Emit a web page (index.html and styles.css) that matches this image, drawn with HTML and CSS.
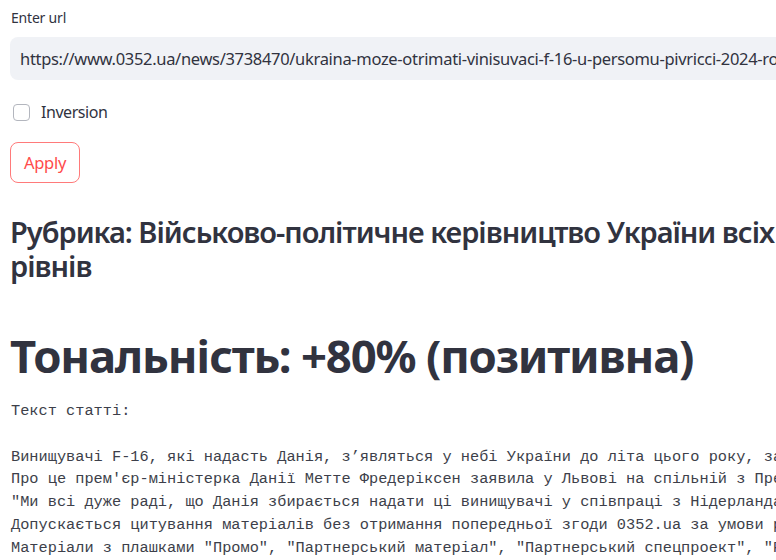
FILE: index.html
```html
<!DOCTYPE html>
<html lang="uk">
<head>
<meta charset="utf-8">
<title>Тональність статті</title>
<link rel="stylesheet" href="styles.css">
</head>
<body>
<main class="app">
  <label class="field-label" for="url">Enter url</label>
  <div class="text-input">
    <input id="url" type="text" value="https://www.0352.ua/news/3738470/ukraina-moze-otrimati-vinisuvaci-f-16-u-persomu-pivricci-2024-roci">
  </div>

  <label class="check-row">
    <span class="check-box"></span>
    <span class="check-text">Inversion</span>
  </label>

  <button class="apply-btn" type="button">Apply</button>

  <h3 class="rubric">Рубрика: Військово-політичне керівництво України всіх рівнів</h3>

  <h1 class="tone">Тональність: +80% (позитивна)</h1>

  <pre class="article">Текст статті:

Винищувачі F-16, які надасть Данія, з’являться у небі України до літа цього року, за словами прем'єр-міністерки.
Про це прем'єр-міністерка Данії Метте Фредеріксен заявила у Львові на спільній з Президентом України пресконференції.
"Ми всі дуже раді, що Данія збирається надати ці винищувачі у співпраці з Нідерландами та США", - сказала вона.
Допускається цитування матеріалів без отримання попередньої згоди 0352.ua за умови розміщення гіперпосилання.
Матеріали з плашками "Промо", "Партнерський матеріал", "Партнерський спецпроект", "Реклама" публікуються на правах реклами.</pre>
</main>
</body>
</html>
```

FILE: styles.css
```css
html, body {
  margin: 0;
  padding: 0;
  background: #ffffff;
  overflow: hidden;
}

.app {
  width: 840px;
  padding: 7px 0 0 10px;
  display: flex;
  flex-direction: column;
  align-items: flex-start;
  font-family: "Noto Sans", "Open Sans", sans-serif;
  color: #31333f;
}

.field-label {
  font-size: 14px;
  line-height: 22px;
  height: 22px;
  padding-left: 1px;
  letter-spacing: -0.2px;
}

.text-input {
  margin-top: 8px;
  width: 100%;
  height: 43px;
  background: #f0f2f6;
  border-radius: 8px;
  display: flex;
  align-items: center;
  overflow: hidden;
}

.text-input input {
  border: 0;
  outline: 0;
  background: transparent;
  width: 100%;
  padding: 0 0 0 10px;
  font-family: inherit;
  font-size: 16.5px;
  letter-spacing: -0.32px;
  color: #31333f;
}

.check-row {
  margin-top: 20px;
  height: 24px;
  display: flex;
  align-items: center;
  gap: 11px;
  padding-left: 3px;
  font-size: 16px;
  letter-spacing: -0.45px;
}

.check-box {
  width: 15px;
  height: 15px;
  border: 1px solid #b3b6be;
  border-radius: 4px;
  background: #fff;
}

.apply-btn {
  margin-top: 18px;
  height: 41px;
  width: 70px;
  padding: 0;
  border: 1px solid #ff7a7a;
  border-radius: 8px;
  background: #fff;
  color: #ff4b4b;
  font-family: inherit;
  font-size: 16.5px;
  letter-spacing: -0.3px;
}

.rubric {
  margin: 32px 0 0;
  font-size: 29px;
  line-height: 34px;
  font-weight: 600;
  letter-spacing: -1px;
}

.tone {
  margin: 43px 0 0;
  font-size: 45.5px;
  line-height: 58px;
  font-weight: 700;
  letter-spacing: -1.2px;
}

.article {
  margin: 16px 0 0 1px;
  font-family: "Liberation Mono", "DejaVu Sans Mono", monospace;
  font-size: 15.3px;
  line-height: 22.8px;
  color: #3d3f4a;
  white-space: pre;
}
```
